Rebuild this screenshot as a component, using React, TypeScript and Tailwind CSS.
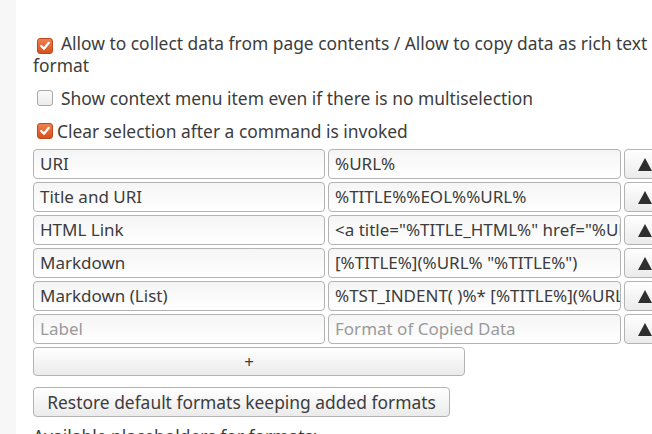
import React from 'react';

const rows = [
    { label: 'URI', format: '%URL%' },
    { label: 'Title and URI', format: '%TITLE%%EOL%%URL%' },
    { label: 'HTML Link', format: '<a title="%TITLE_HTML%" href="%URL_HTML%">%TITLE_HTML%</a>' },
    { label: 'Markdown', format: '[%TITLE%](%URL% "%TITLE%")' },
    { label: 'Markdown (List)', format: '%TST_INDENT(  )%* [%TITLE%](%URL% "%TITLE%")' },
];

const Check = ({ checked }: { checked: boolean }) =>
    checked ? (
        <span className="inline-flex h-[16px] w-[16px] shrink-0 items-center justify-center rounded-[3px] border border-[#b84a1c] bg-gradient-to-b from-[#f08050] to-[#d4521c]">
            <svg width="12" height="12" viewBox="0 0 12 12">
                <path d="M2.2 6 L5 8.8 L9.8 2.8" fill="none" stroke="#fff" strokeWidth="2.2" strokeLinecap="round" strokeLinejoin="round" />
            </svg>
        </span>
    ) : (
        <span className="inline-block h-[16px] w-[16px] shrink-0 rounded-[3px] border border-[#a8a8a8] bg-gradient-to-b from-[#fbfbfb] to-[#ececec]" />
    );

const UpButton = () => (
    <button className="flex h-[30px] w-[40px] shrink-0 items-center rounded-[4px] border border-[#b3b3b3] bg-gradient-to-b from-white to-[#ebebeb] pl-[13px]">
        <svg width="14" height="13" viewBox="0 0 14 13">
            <polygon points="7,0 14,13 0,13" fill="#2e2e2e" />
        </svg>
    </button>
);

const inputCls =
    'h-[30px] rounded-[4px] border border-[#b3b3b3] bg-gradient-to-b from-[#f5f5f5] to-white pl-[6px] text-[17px] leading-[28px] overflow-hidden whitespace-nowrap';

const App: React.FC = () => {
    return (
        <div className="flex h-[434px] w-[652px] overflow-hidden bg-white text-[#3c3c3c] font-['Noto_Sans',sans-serif] text-[17.4px]">
            <div className="w-[16px] shrink-0 bg-[#f7f7f7]" />
            <div className="flex-1 pl-[17px] pt-[33px]">
                <div className="leading-[20px] whitespace-nowrap">
                    <span className="ml-[4px] mr-[8px] inline-block align-[-2px]"><Check checked /></span>
                    Allow to collect data from page contents / Allow to copy data as rich text
                    <br />
                    format
                </div>
                <div className="mt-[13px] flex items-center leading-[20px]">
                    <span className="ml-[4px] flex"><Check checked={false} /></span>
                    <span className="ml-[8px]">Show context menu item even if there is no multiselection</span>
                </div>
                <div className="mt-[13px] flex items-center leading-[20px]">
                    <span className="ml-[4px] flex"><Check checked /></span>
                    <span className="ml-[4px]">Clear selection after a command is invoked</span>
                </div>

                <div className="mt-[8px] flex flex-col gap-[3px]">
                    {rows.map((r) => (
                        <div key={r.label} className="flex gap-[3px]">
                            <div className={`${inputCls} w-[292px]`}>{r.label}</div>
                            <div className={`${inputCls} w-[293px]`}>{r.format}</div>
                            <UpButton />
                        </div>
                    ))}
                    <div className="flex gap-[3px]">
                        <div className={`${inputCls} w-[292px] text-[#9a9a9a]`}>Label</div>
                        <div className={`${inputCls} w-[293px] text-[#9a9a9a]`}>Format of Copied Data</div>
                        <UpButton />
                    </div>
                    <button className="h-[29px] w-[432px] rounded-[4px] border border-[#b3b3b3] bg-gradient-to-b from-white to-[#ebebeb] text-[17px] leading-[27px] text-[#3c3c3c]">+</button>
                </div>

                <button className="mt-[11px] h-[30px] w-[417px] rounded-[4px] border border-[#b3b3b3] bg-gradient-to-b from-white to-[#ebebeb] text-[17.4px] leading-[28px] text-[#3c3c3c]">
                    Restore default formats keeping added formats
                </button>
                <div className="mt-[9px] leading-[20px]">Available placeholders for formats:</div>
            </div>
        </div>
    );
};

export default App;
